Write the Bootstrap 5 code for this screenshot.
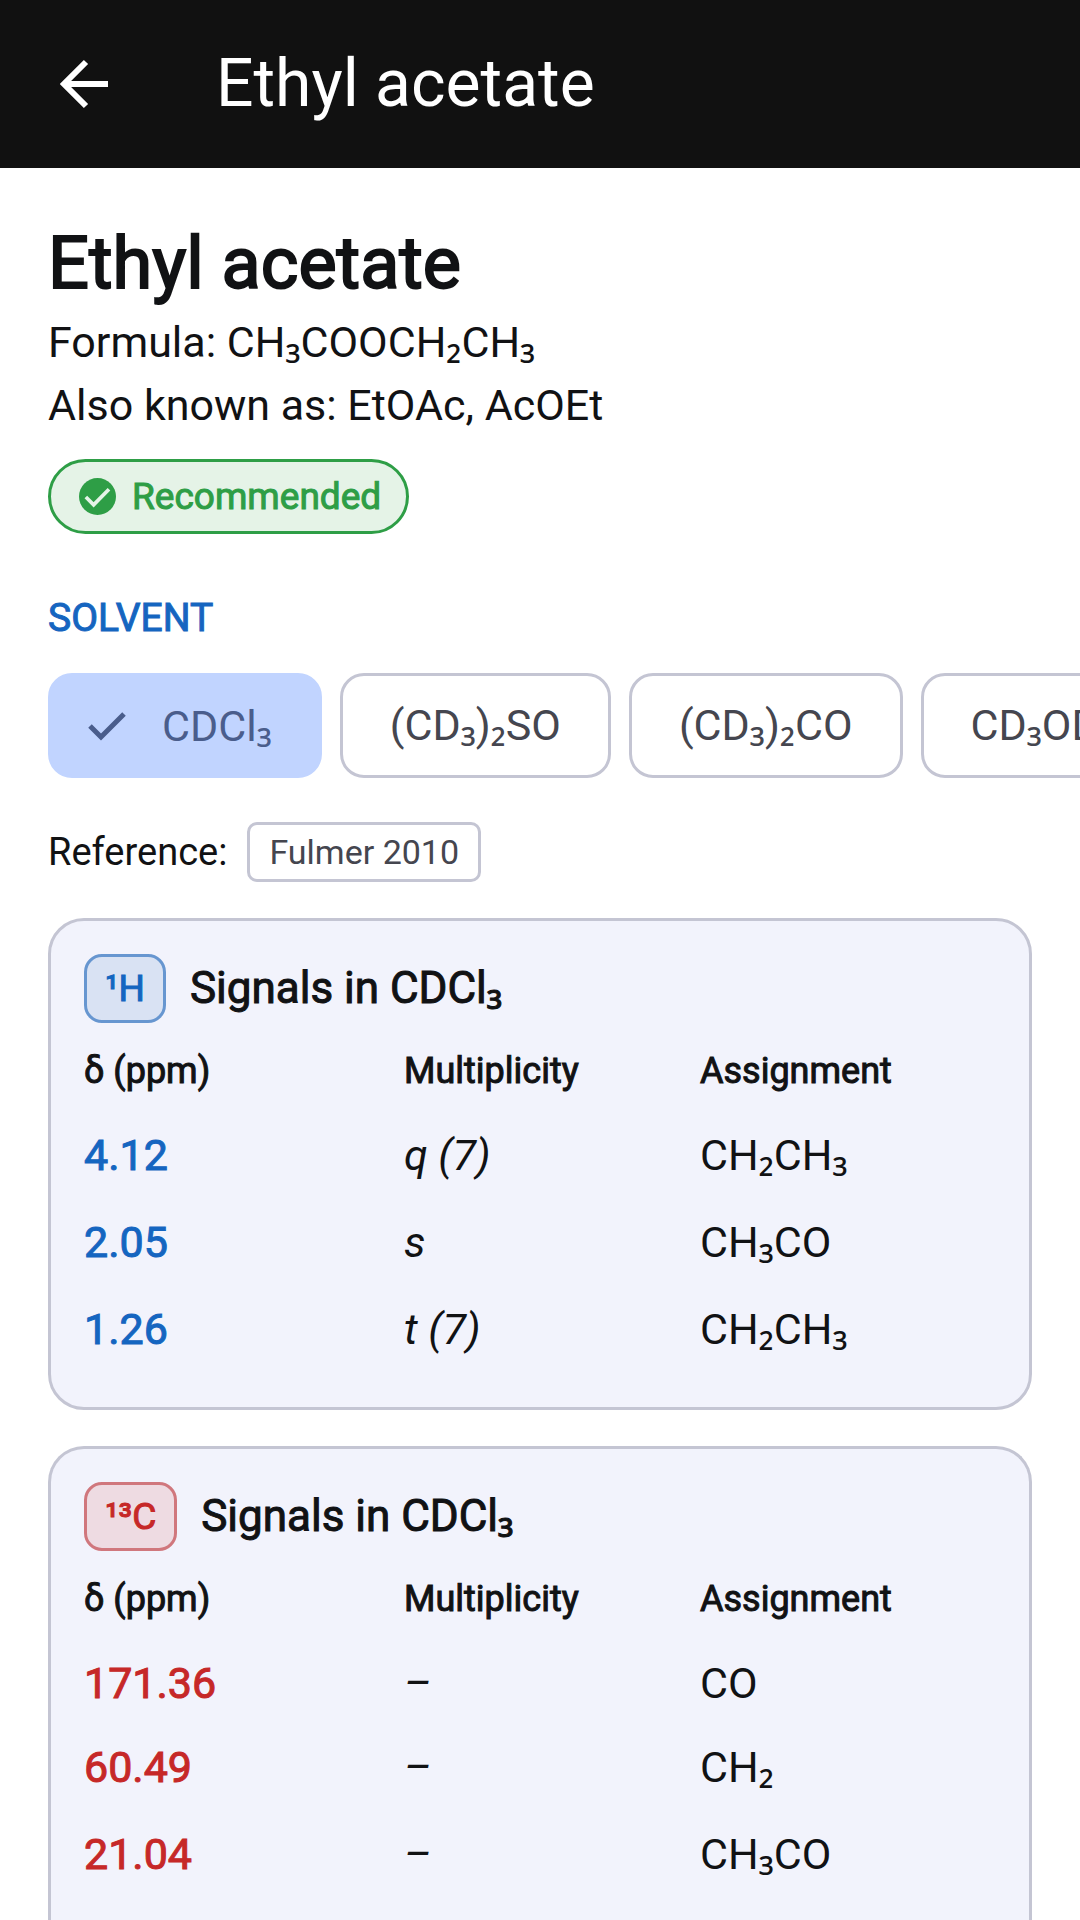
<!DOCTYPE html>
<html lang="en">
<head>
<meta charset="utf-8">
<meta name="viewport" content="width=device-width, initial-scale=1">
<title>Ethyl acetate</title>
<link href="https://cdn.jsdelivr.net/npm/bootstrap@5.3.0/dist/css/bootstrap.min.css" rel="stylesheet">
<style>
  :root { --ink: #111214; --line: #c4c5d3; --blue: #1565c0; --red: #c62828; --green: #2e9e46; }
  body { font-family: Roboto, "Noto Sans", sans-serif; color: var(--ink); font-size: 43px; line-height: 63px; background: #fff; }
  .sb { font-family: "Noto Sans", sans-serif; line-height: 1; }
  .heavy { font-weight: 400; -webkit-text-stroke: 1px currentColor; }
  .app-bar { background: #111; color: #fff; height: 168px; padding: 0 48px; gap: 96px; }
  .app-bar h1 { font-size: 66px; line-height: 82px; font-weight: 400; }
  .back-btn { width: 72px; height: 72px; color: #fff; border: 0; }
  .screen { padding: 54px 48px 0; overflow: hidden; }
  .compound { font-size: 72px; line-height: 84px; -webkit-text-stroke-width: 2px; margin-bottom: 5px; }
  .status { background: #e5f3e7; border: 3px solid var(--green); color: var(--green); font-size: 37px; line-height: 69px; padding: 0 25px 0 28px; gap: 16px; margin: 22px 0 54px; }
  .section-name { color: var(--blue); font-size: 39px; line-height: 60px; margin-bottom: 25px; }
  .solvents { gap: 18px; margin-right: -48px; overflow: hidden; }
  .solvents .btn { flex: none; height: 105px; padding: 0 47px; border: 3px solid var(--line); border-radius: 24px; color: #45464f; font-size: 43px; line-height: 98px; }
  .solvents .btn-check:checked + .btn { background: #c1d4ff; border-color: #c1d4ff; color: #4a5d8c; padding: 0 47px 0 35px; }
  .solvents .btn svg { margin-right: 34px; }
  .source { gap: 20px; margin: 44px 0 36px; font-size: 38px; line-height: 60px; }
  .source-btn { border: 3px solid var(--line); border-radius: 10px; padding: 0 19px; color: #45464f; font-size: 34px; line-height: 54px; }
  .panel { background: #f2f3fc; border: 3px solid var(--line); border-radius: 36px; padding: 33px 33px 34px; margin-bottom: 36px; color: var(--ink); }
  .panel-open { border-bottom: 0; border-bottom-left-radius: 0; border-bottom-right-radius: 0; margin-bottom: 0; }
  .panel-head { gap: 24px; margin-bottom: 24px; }
  .panel-head h3 { font-size: 44px; line-height: 63px; }
  .nucleus { border: 3px solid; border-radius: 18px; font-size: 37px; line-height: 63px; padding: 0 18px; }
  .nucleus-h { color: var(--blue); background: #d9e2f3; border-color: #6796d0; }
  .nucleus-c { color: var(--red); background: #eedbe2; border-color: #d0777d; }
  .signals { width: 100%; table-layout: fixed; }
  .signals th { font-size: 36px; line-height: 48px; height: 65px; padding: 0; vertical-align: top; }
  .signals td { height: 87px; padding: 12px 0 0; vertical-align: top; }
  .signals .short td { height: 84px; }
  .c-shift { width: 320px; } .c-mult { width: 296px; }
  .shift-h { color: var(--blue); } .shift-c { color: var(--red); }
</style>
<script src="https://cdn.jsdelivr.net/npm/bootstrap@5.3.0/dist/js/bootstrap.bundle.min.js"></script>
</head>
<body>
<div class="d-flex flex-column vh-100 overflow-hidden">
  <header class="app-bar d-flex align-items-center flex-shrink-0">
    <button type="button" class="back-btn btn p-0 d-flex align-items-center" aria-label="Back">
      <svg width="72" height="72" viewBox="0 0 72 72" fill="none" stroke="currentColor" stroke-width="6"><path d="M60 36H16M38 14L16 36l22 22"/></svg>
    </button>
    <h1 class="m-0">Ethyl acetate</h1>
  </header>

  <main class="screen d-flex flex-column flex-grow-1">
    <h2 class="compound heavy mt-0">Ethyl acetate</h2>
    <p class="m-0">Formula: CH<span class="sb">₃</span>COOCH<span class="sb">₂</span>CH<span class="sb">₃</span></p>
    <p class="m-0">Also known as: EtOAc, AcOEt</p>
    <span class="status heavy rounded-pill d-inline-flex align-items-center align-self-start">
      <svg width="37" height="37" viewBox="0 0 20 20" aria-hidden="true"><circle cx="10" cy="10" r="10" fill="currentColor"/><path d="M3.7 10.3l4.2 4.2 8.3-8.4" fill="none" stroke="#e5f3e7" stroke-width="2"/></svg>
      Recommended
    </span>

    <h2 class="section-name heavy mt-0">SOLVENT</h2>
    <div class="solvents d-flex flex-nowrap flex-shrink-0" role="radiogroup" aria-label="Solvent">
      <input class="btn-check" type="radio" name="solvent" id="cdcl3" checked>
      <label class="btn d-flex align-items-center" for="cdcl3"><svg width="42" height="32" viewBox="0 0 42 32" fill="none" stroke="currentColor" stroke-width="5" aria-hidden="true"><path d="M4 16l11 11L38 4"/></svg><span>CDCl<span class="sb">₃</span></span></label>
      <input class="btn-check" type="radio" name="solvent" id="dmso">
      <label class="btn" for="dmso">(CD<span class="sb">₃</span>)<span class="sb">₂</span>SO</label>
      <input class="btn-check" type="radio" name="solvent" id="acetone">
      <label class="btn" for="acetone">(CD<span class="sb">₃</span>)<span class="sb">₂</span>CO</label>
      <input class="btn-check" type="radio" name="solvent" id="methanol">
      <label class="btn" for="methanol">CD<span class="sb">₃</span>OD</label>
    </div>

    <div class="source d-flex align-items-center">
      <span>Reference:</span>
      <button type="button" class="source-btn btn">Fulmer 2010</button>
    </div>

    <section class="panel flex-shrink-0">
      <div class="panel-head d-flex align-items-center">
        <span class="nucleus nucleus-h heavy">¹H</span>
        <h3 class="heavy m-0">Signals in CDCl<span class="sb">₃</span></h3>
      </div>
      <table class="signals">
        <thead><tr><th class="c-shift heavy" scope="col">δ (ppm)</th><th class="c-mult heavy" scope="col">Multiplicity</th><th class="heavy" scope="col">Assignment</th></tr></thead>
        <tbody>
          <tr><td class="shift-h heavy">4.12</td><td class="fst-italic">q (7)</td><td>CH<span class="sb">₂</span>CH<span class="sb">₃</span></td></tr>
          <tr><td class="shift-h heavy">2.05</td><td class="fst-italic">s</td><td>CH<span class="sb">₃</span>CO</td></tr>
          <tr><td class="shift-h heavy">1.26</td><td class="fst-italic">t (7)</td><td>CH<span class="sb">₂</span>CH<span class="sb">₃</span></td></tr>
        </tbody>
      </table>
    </section>

    <section class="panel panel-open flex-grow-1">
      <div class="panel-head d-flex align-items-center">
        <span class="nucleus nucleus-c heavy">¹³C</span>
        <h3 class="heavy m-0">Signals in CDCl<span class="sb">₃</span></h3>
      </div>
      <table class="signals">
        <thead><tr><th class="c-shift heavy" scope="col">δ (ppm)</th><th class="c-mult heavy" scope="col">Multiplicity</th><th class="heavy" scope="col">Assignment</th></tr></thead>
        <tbody>
          <tr class="short"><td class="shift-c heavy">171.36</td><td class="fst-italic">–</td><td>CO</td></tr>
          <tr><td class="shift-c heavy">60.49</td><td class="fst-italic">–</td><td>CH<span class="sb">₂</span></td></tr>
          <tr><td class="shift-c heavy">21.04</td><td class="fst-italic">–</td><td>CH<span class="sb">₃</span>CO</td></tr>
        </tbody>
      </table>
    </section>
  </main>
</div>
</body>
</html>
